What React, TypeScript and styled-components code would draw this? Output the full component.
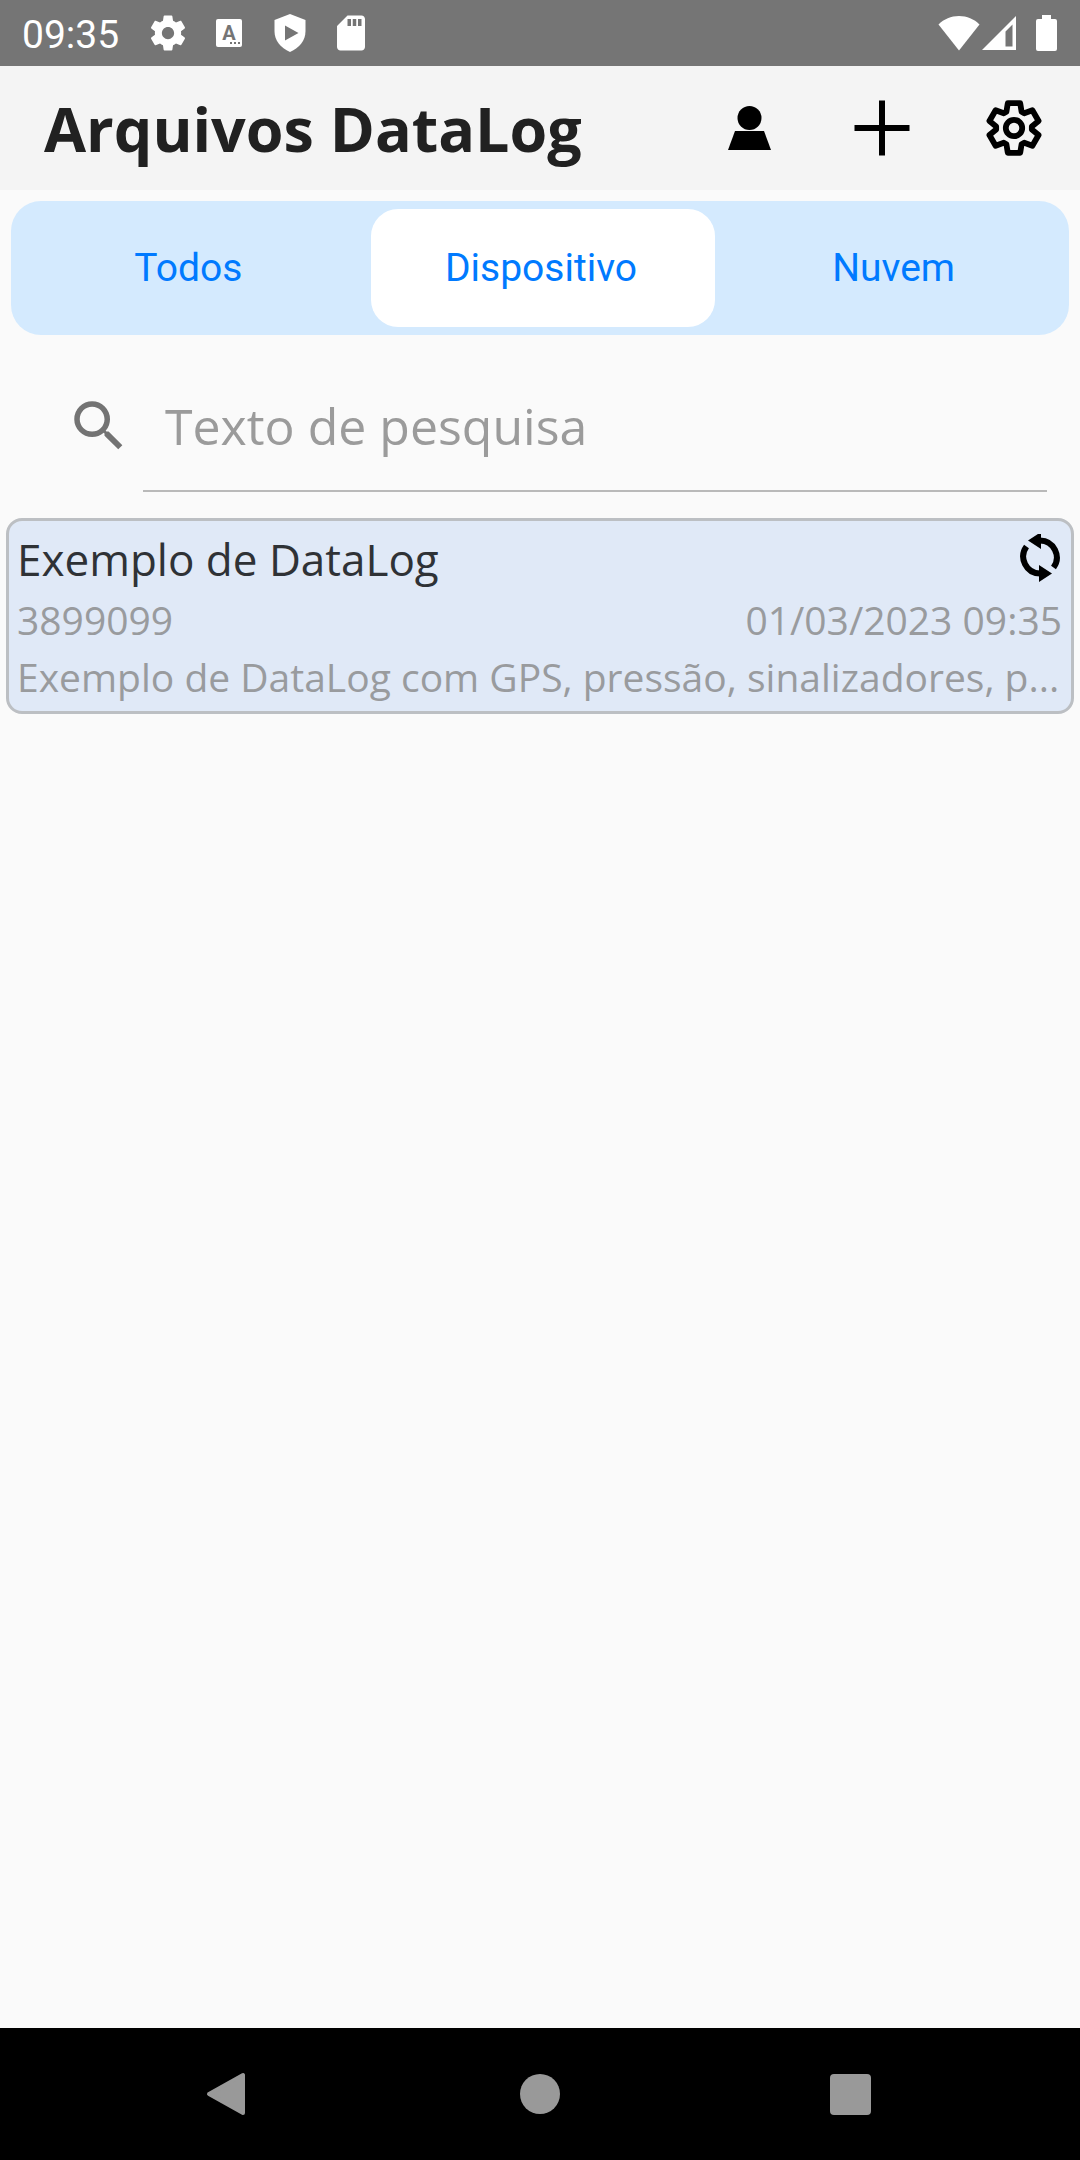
import React, { useState } from "react";
import styled, { createGlobalStyle } from "styled-components";

const colors = {
  page: "#fafafa",
  header: "#f4f4f4",
  statusBar: "#757575",
  accent: "#007aff",
  track: "#d4eafe",
  card: "#e0e9f7",
  cardBorder: "#bcbfc3",
  text: "#212121",
  muted: "#999b9e",
  navIcon: "#999999",
};

const GlobalStyle = createGlobalStyle`
  * {
    box-sizing: border-box;
  }
  body {
    margin: 0;
    background: ${colors.page};
    font-family: "Open Sans", "Noto Sans", sans-serif;
  }
  svg {
    display: block;
    flex: none;
  }
`;

const Screen = styled.div`
  display: flex;
  flex-direction: column;
  min-height: 100vh;
`;

const StatusBar = styled.div`
  display: flex;
  align-items: center;
  justify-content: space-between;
  height: 66px;
  padding: 0 6px 0 22px;
  background: ${colors.statusBar};
  color: #fff;
`;

const StatusGroup = styled.div<{ gap: number }>`
  display: flex;
  align-items: center;
  gap: ${props => props.gap}px;
`;

const Clock = styled.span`
  padding-top: 4px;
  font-family: Roboto, sans-serif;
  font-size: 39px;
  line-height: 48px;
  margin-right: 9px;
`;

const Header = styled.header`
  display: flex;
  align-items: center;
  height: 124px;
  padding-left: 44px;
  background: ${colors.header};
`;

const Title = styled.h1`
  flex: 1;
  margin: 0;
  padding-top: 2px;
  font-size: 61px;
  line-height: 80px;
  font-weight: 700;
  color: ${colors.text};
`;

const IconButton = styled.button`
  display: flex;
  align-items: center;
  justify-content: center;
  width: 132px;
  height: 100%;
  padding: 0;
  border: none;
  background: none;
  color: #000;
  cursor: pointer;
`;

const Segments = styled.div`
  display: grid;
  grid-template-columns: repeat(3, 1fr);
  height: 134px;
  margin: 11px 11px 0;
  border-radius: 30px;
  background: ${colors.track};
`;

const Segment = styled.button<{ active: boolean }>`
  margin: 8px 1px 8px 7px;
  padding: 0 4px 0 0;
  border: none;
  border-radius: 27px;
  background: ${props => (props.active ? "#fff" : "transparent")};
  color: ${colors.accent};
  font-family: Roboto, sans-serif;
  font-size: 39px;
  cursor: pointer;
`;

const SearchRow = styled.label`
  display: flex;
  align-items: center;
  gap: 11px;
  margin-top: 25px;
  padding: 0 33px 0 66px;
  color: #737373;
`;

const SearchInput = styled.input`
  flex: 1;
  min-width: 0;
  height: 132px;
  padding: 2px 22px 0;
  border: none;
  border-bottom: 2px solid #b9b9b9;
  outline: none;
  background: none;
  font-family: inherit;
  font-size: 50px;
  color: ${colors.text};

  &::placeholder {
    color: #9b9b9b;
    opacity: 1;
  }
`;

const LogList = styled.main`
  flex: 1;
  padding: 26px 6px;
`;

const LogCard = styled.article`
  padding: 7px 9px 6px 8px;
  border: 3px solid ${colors.cardBorder};
  border-radius: 16px;
  background: ${colors.card};
`;

const CardRow = styled.div`
  display: flex;
  align-items: center;
  justify-content: space-between;
`;

const LogName = styled.h2`
  margin: 0;
  font-size: 44px;
  line-height: 63px;
  font-weight: 400;
  color: #2f3236;
`;

const LogText = styled.span`
  display: block;
  white-space: nowrap;
  font-size: 39px;
  line-height: 57px;
  color: ${colors.muted};
`;

const NavBar = styled.nav`
  display: grid;
  grid-template-columns: repeat(3, 1fr);
  height: 132px;
  padding: 0 74px;
  background: #000;
`;

const NavButton = styled(IconButton)`
  width: 100%;
  color: ${colors.navIcon};
`;

const SettingsGlyph = () => (
  <svg width="42" height="42" viewBox="0 0 24 24" fill="currentColor">
    <path d="M19.43 12.98c.04-.32.07-.64.07-.98s-.03-.66-.07-.98l2.11-1.65c.19-.15.24-.42.12-.64l-2-3.46c-.12-.22-.39-.3-.61-.22l-2.49 1c-.52-.4-1.08-.73-1.69-.98l-.38-2.65A.488.488 0 0 0 14 2h-4c-.25 0-.46.18-.49.42l-.38 2.65c-.61.25-1.17.59-1.69.98l-2.49-1c-.23-.09-.49 0-.61.22l-2 3.46c-.13.22-.07.49.12.64l2.11 1.65c-.04.32-.07.65-.07.98s.03.66.07.98l-2.11 1.65c-.19.15-.24.42-.12.64l2 3.46c.12.22.39.3.61.22l2.49-1c.52.4 1.08.73 1.69.98l.38 2.65c.03.24.24.42.49.42h4c.25 0 .46-.18.49-.42l.38-2.65c.61-.25 1.17-.59 1.69-.98l2.49 1c.23.09.49 0 .61-.22l2-3.46c.12-.22.07-.49-.12-.64l-2.11-1.65zM12 15.5c-1.93 0-3.5-1.57-3.5-3.5s1.57-3.5 3.5-3.5 3.5 1.57 3.5 3.5-1.57 3.5-3.5 3.5z" />
  </svg>
);

const KeyboardGlyph = () => (
  <svg width="42" height="42" viewBox="0 0 42 42">
    <rect x="8" y="7" width="26" height="28" rx="2" fill="currentColor" />
    <text
      x="21"
      y="28"
      textAnchor="middle"
      fontFamily="Roboto, sans-serif"
      fontWeight="700"
      fontSize="20"
      fill={colors.statusBar}
    >
      A
    </text>
    <path d="M22 30h2v2h-2zM26 30h2v2h-2zM30 30h2v2h-2z" fill={colors.statusBar} />
  </svg>
);

const ShieldGlyph = () => (
  <svg width="42" height="42" viewBox="0 0 42 42">
    <path
      d="M21 2 36.500 8v11c0 9.500-6 17-15.500 21C11.500 36 5.500 28.500 5.500 19V8z"
      fill="currentColor"
    />
    <path d="M16 13.500v15L29.500 21z" fill={colors.statusBar} />
  </svg>
);

const SdCardGlyph = () => (
  <svg width="42" height="42" viewBox="0 0 24 24" fill="currentColor">
    <path d="M18 2h-8L4.020 8 4 20c0 1.100.9 2 2 2h12c1.100 0 2-.9 2-2V4c0-1.100-.9-2-2-2zm-6 6h-2V4h2v4zm3 0h-2V4h2v4zm3 0h-2V4h2v4z" />
  </svg>
);

const WifiGlyph = () => (
  <svg width="42" height="36" viewBox="0 0 42 36" fill="currentColor">
    <path d="M21 35.500 0.500 9.500C6 4 13 1 21 1s15 3 20.500 8.500z" />
  </svg>
);

const SignalGlyph = () => (
  <svg width="36" height="36" viewBox="0 0 36 36" fill="currentColor">
    <path fillRule="evenodd" d="M35 1v34H1zM31.500 9.500 24.500 16.500v15h7z" />
  </svg>
);

const BatteryGlyph = () => (
  <svg width="56" height="36" viewBox="0 0 56 36" fill="currentColor">
    <path d="M24 0h9v4h4q2 0 2 2v28q0 2-2 2H20q-2 0-2-2V6q0-2 2-2h4z" />
  </svg>
);

const UserGlyph = () => (
  <svg width="60" height="60" viewBox="0 0 60 60" fill="currentColor">
    <circle cx="29.500" cy="20" r="12" />
    <path d="M15 33h29l7 19H8z" />
  </svg>
);

const PlusGlyph = () => (
  <svg width="60" height="60" viewBox="0 0 60 60" fill="currentColor">
    <path d="M27 2.500h6v24.500h24.500v6H33v24.500h-6V33H2.500v-6H27z" />
  </svg>
);

// One tooth, repeated every 60 degrees around the centre
const TOOTH = [
  [-7.6, -16.2],
  [-6.2, -24.8],
  [6.2, -24.8],
  [7.6, -16.2],
];

const gearPoints = [0, 1, 2, 3, 4, 5]
  .map(i => {
    const a = (i * Math.PI) / 3;
    return TOOTH.map(
      ([x, y]) =>
        `${(x * Math.cos(a) - y * Math.sin(a)).toFixed(2)},${(
          x * Math.sin(a) +
          y * Math.cos(a)
        ).toFixed(2)}`,
    ).join(" ");
  })
  .join(" ");

const GearGlyph = () => (
  <svg
    width="60"
    height="60"
    viewBox="-30 -30 60 60"
    fill="none"
    stroke="currentColor"
    strokeWidth="5.800"
    strokeLinejoin="round"
  >
    <polygon points={gearPoints} />
    <circle r="8.200" />
  </svg>
);

const SearchGlyph = () => (
  <svg width="66" height="66" viewBox="0 0 24 24" fill="currentColor">
    <path d="M15.500 14h-.79l-.28-.27A6.471 6.471 0 0 0 16 9.500 6.500 6.500 0 1 0 9.500 16c1.610 0 3.090-.59 4.230-1.570l.27.28v.79l5 4.990L20.490 19l-4.990-5zm-6 0C7.010 14 5 11.990 5 9.500S7.010 5 9.500 5 14 7.010 14 9.500 11.990 14 9.500 14z" />
  </svg>
);

const SyncGlyph = () => (
  <svg width="42" height="52" viewBox="-20 -23 42 52">
    <g id="sync-half">
      <path
        d="M0-16.500A17 17 0 0 1 13.500 10.500"
        fill="none"
        stroke="#000"
        strokeWidth="6"
      />
      <path d="M-12-16.500 1-25V-8z" />
    </g>
    <use href="#sync-half" transform="rotate(180)" />
  </svg>
);

const BackGlyph = () => (
  <svg width="46" height="46" viewBox="0 0 46 46" fill="currentColor">
    <path
      d="M37 4v38L3 23z"
      stroke="currentColor"
      strokeWidth="4"
      strokeLinejoin="round"
    />
  </svg>
);

const HomeGlyph = () => (
  <svg width="46" height="46" viewBox="0 0 46 46" fill="currentColor">
    <circle cx="23" cy="23" r="20" />
  </svg>
);

const RecentsGlyph = () => (
  <svg width="46" height="46" viewBox="0 0 46 46" fill="currentColor">
    <rect x="2" y="3" width="41" height="41" rx="4" />
  </svg>
);

const SEGMENTS = ["Todos", "Dispositivo", "Nuvem"];

const App = () => {
  const [segment, setSegment] = useState("Dispositivo");
  const [query, setQuery] = useState("");

  return (
    <React.Fragment>
      <GlobalStyle />
      <Screen>
        <StatusBar>
          <StatusGroup gap={19}>
            <Clock>09:35</Clock>
            <SettingsGlyph />
            <KeyboardGlyph />
            <ShieldGlyph />
            <SdCardGlyph />
          </StatusGroup>
          <StatusGroup gap={1}>
            <WifiGlyph />
            <SignalGlyph />
            <BatteryGlyph />
          </StatusGroup>
        </StatusBar>
        <Header>
          <Title>Arquivos DataLog</Title>
          <IconButton aria-label="Conta">
            <UserGlyph />
          </IconButton>
          <IconButton aria-label="Adicionar">
            <PlusGlyph />
          </IconButton>
          <IconButton aria-label="Configurações">
            <GearGlyph />
          </IconButton>
        </Header>
        <Segments>
          {SEGMENTS.map(name => (
            <Segment
              key={name}
              active={name === segment}
              aria-pressed={name === segment}
              onClick={() => setSegment(name)}
            >
              {name}
            </Segment>
          ))}
        </Segments>
        <SearchRow>
          <SearchGlyph />
          <SearchInput
            type="text"
            aria-label="Texto de pesquisa"
            placeholder="Texto de pesquisa"
            value={query}
            onChange={e => setQuery(e.target.value)}
          />
        </SearchRow>
        <LogList>
          <LogCard>
            <CardRow>
              <LogName>Exemplo de DataLog</LogName>
              <SyncGlyph />
            </CardRow>
            <CardRow>
              <LogText>3899099</LogText>
              <LogText>01/03/2023 09:35</LogText>
            </CardRow>
            <LogText>
              Exemplo de DataLog com GPS, pressão, sinalizadores, p...
            </LogText>
          </LogCard>
        </LogList>
        <NavBar>
          <NavButton aria-label="Voltar">
            <BackGlyph />
          </NavButton>
          <NavButton aria-label="Início">
            <HomeGlyph />
          </NavButton>
          <NavButton aria-label="Recentes">
            <RecentsGlyph />
          </NavButton>
        </NavBar>
      </Screen>
    </React.Fragment>
  );
};

export default App;
